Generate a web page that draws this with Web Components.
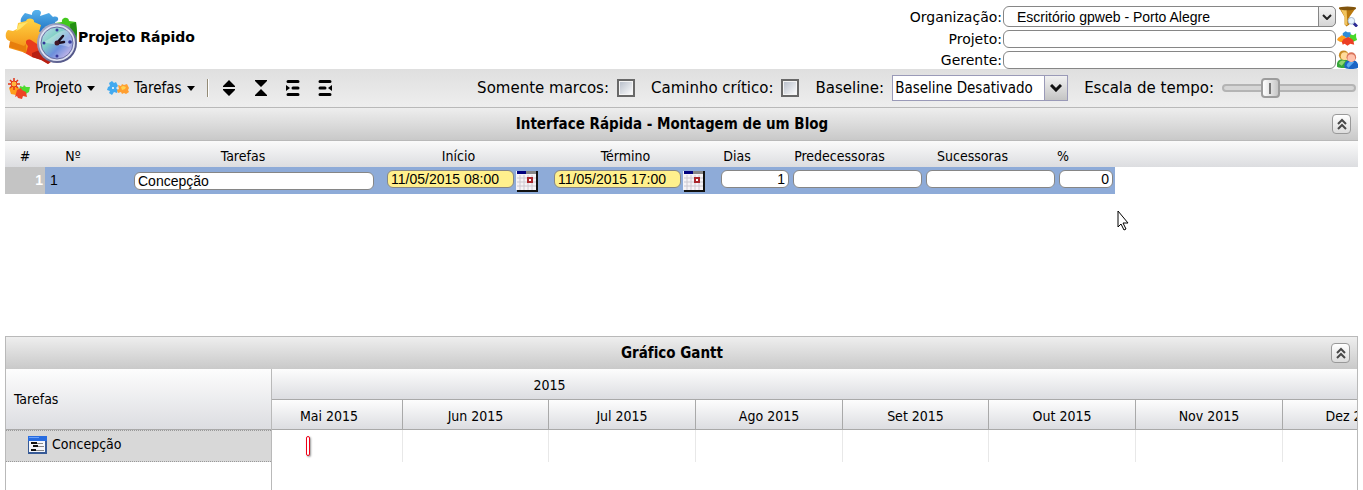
<!DOCTYPE html>
<html lang="pt-BR">
<head>
<meta charset="utf-8">
<meta name="viewport" content="width=device-width, initial-scale=1">
<title>Projeto Rápido</title>
<style>
  * { box-sizing: border-box; }
  body {
    --ui: "DejaVu Sans Condensed", "DejaVu Sans", sans-serif;
    --wide: "DejaVu Sans", sans-serif;
    --field: "Liberation Sans", Arial, sans-serif;
    --line: #b9b9b9;
    margin: 0;
    padding: 0 5px;
    min-height: 100vh;
    display: flex;
    flex-direction: column;
    background: #fff;
    color: #000;
    font: 14px/18px var(--ui);
    text-rendering: optimizeSpeed;
  }
  gp-gantt { flex: 1; }
</style>
</head>
<body>
<gp-header>Projeto Rápido</gp-header>
<gp-toolbar></gp-toolbar>
<gp-titlebar>Interface Rápida - Montagem de um Blog</gp-titlebar>
<gp-task-grid></gp-task-grid>
<gp-gantt></gp-gantt>
<gp-pointer></gp-pointer>

<script>
const ICONS = {
  logo: `<svg viewBox="0 0 72 54" width="72" height="54">
    <defs>
      <linearGradient id="b" x2="0" y2="1"><stop stop-color="#58b4ee"/><stop offset="1" stop-color="#1263b8"/></linearGradient>
      <linearGradient id="o" x2="0" y2="1"><stop stop-color="#ffd545"/><stop offset="1" stop-color="#f28a10"/></linearGradient>
      <linearGradient id="f" x2="1" y2="1"><stop stop-color="#c9d9f5"/><stop offset=".35" stop-color="#80d0c4"/><stop offset=".6" stop-color="#6c8fdc"/><stop offset="1" stop-color="#efc9ef"/></linearGradient>
      <linearGradient id="r" x2="1" y2="1"><stop stop-color="#b9bcd6"/><stop offset="1" stop-color="#3f4379"/></linearGradient>
    </defs>
    <path fill="url(#b)" d="M20 3l7 2c-1-6 9-7 9-2l-1 3 9-3 4 4c6-2 7 4 2 5l2 6-12 9-14-4-9-6 4-3c-3-3-4-2-5-1-1-3 0-6 4-10z"/>
    <path fill="#42c81c" d="M50 13l7-1c-1-5 7-6 7-1l7 1 1 10-1 12-14-4-9-7z"/>
    <path fill="#238d13" d="M65 14l6-2 1 10-1 12-5-5z"/>
    <path fill="#e83b1c" d="M22 26l7-5 6 3 8 0 4 25-4 5-6-4-10-3-9-5z"/>
    <path fill="#b81f12" d="M27 43l10-4 12 11-6 4-7-4-9-3z"/>
    <path fill="url(#o)" d="M13 13l8-2c1-4 9-3 8 1l7 3-2 7c4-1 5 4 1 5l-3 7-6-4c-5-2-7 3-3 6l-2 7-17-5 2-7C-1 31 0 22 3 20l5 1 4-2z"/>
    <path fill="#e77e0c" d="M5 31l14 5 2-2v8l-17-5z"/>
    <path fill="#ffe46a" d="M14 14l9-2-8 7-4 2z"/>
    <circle cx="52" cy="33" r="20" fill="url(#r)"/>
    <circle cx="52" cy="33" r="18" fill="#dfe2f3"/>
    <circle cx="52" cy="33" r="16" fill="url(#f)" stroke="#6a6fa3"/>
    <path d="M37 32c8-1 15-12 25-12 7 6 5 14 2 17-10-3-19-3-27-5z" fill="#fff" opacity=".3"/>
    <g fill="#34389a"><circle cx="52" cy="20" r="1.5"/><circle cx="65" cy="32" r="1.8"/><circle cx="52" cy="46" r="1.5"/><circle cx="39" cy="33" r="1.5"/></g>
    <path d="M52 33l6-7M53 33l6-1" stroke="#1b0c1e" stroke-width="2.5" stroke-linecap="round"/>
    <circle cx="52" cy="33" r="2.5" fill="#421523"/>
  </svg>`,
  projeto: `<svg viewBox="0 0 22 22" width="22" height="22">
    <path fill="#ff9d1c" d="M1 11l5-3 5 3 1 5-4 2-5-1z"/>
    <path fill="#4ddb31" d="M12 9l3 1 1-2 2 2h4l-1 5-5 3-5-5z"/>
    <path fill="#ee4524" d="M9 13l4-2 1 2 4 2 1 5-4-1-1 3-4-1-1-2-2 1z"/>
    <g stroke="#e1361a" stroke-width="1.5"><path d="M6 1v12M0 7h12M2 3l8 8M10 3l-8 8"/></g>
    <circle cx="6" cy="7" r="3" fill="#ffb63c" stroke="#e1361a"/>
  </svg>`,
  tarefas: `<svg viewBox="0 0 22 16" width="22" height="16">
    <path fill="#42aaf0" d="M2 3l3-2 2 2 2-1 2 4-2 2 2 2-1 3-3-1-2 3-3-2 1-2-3-1 1-3 2-1z"/>
    <circle cx="6" cy="8" r="1" fill="#fff"/>
    <path fill="#ff9f31" d="M11 5l3 1 1-2 2 1 3-1 2 4-1 2 1 2-3 2-2-1-2 1-1-2-3 1-1-3 2-1z"/>
    <path fill="#ffd34f" d="M14 7l2-1 3 1-1 2-3 1z"/>
  </svg>`,
  expand: `<svg viewBox="0 0 16 18" width="16" height="18"><path d="M8 1l6 6v1H2V7zM2 10h12v1l-6 6-6-6z"/></svg>`,
  collapse: `<svg viewBox="0 0 16 18" width="16" height="18"><path d="M2 1h12v1L8 8 2 2zM8 10l6 6v1H2v-1z"/></svg>`,
  indent: `<svg viewBox="0 0 16 18" width="16" height="18">
    <path d="M3 2.500h10M8 9h5M3 15.500h10" stroke="#000" stroke-width="3" stroke-linecap="round"/><path d="M1 6l4 3-4 3z"/>
  </svg>`,
  outdent: `<svg viewBox="0 0 16 18" width="16" height="18">
    <path d="M3 2.500h10M3 9h5M3 15.500h10" stroke="#000" stroke-width="3" stroke-linecap="round"/><path d="M15 6l-4 3 4 3z"/>
  </svg>`,
  caret: `<svg viewBox="0 0 8 5" width="8" height="5"><path d="M0 0h8L4 5z"/></svg>`,
  chevron: `<svg viewBox="0 0 10 6" width="10" height="6"><path d="M1 1l4 4 4-4" fill="none" stroke="#222" stroke-width="2"/></svg>`,
  chevronBold: `<svg viewBox="0 0 12 8" width="12" height="8"><path d="M1 1l5 5 5-5" fill="none" stroke="#111" stroke-width="3"/></svg>`,
  up: `<svg viewBox="0 0 12 12" width="12" height="12"><path d="M2 6l4-4 4 4M2 11l4-4 4 4" fill="none" stroke="#484848" stroke-width="2"/></svg>`,
  funnel: `<svg viewBox="0 0 22 21" width="22" height="21">
    <path fill="#b9790f" d="M2 1h18l-7 10v8l-3 2-2-2v-8z"/>
    <path fill="#f1c45d" d="M4 3h6l1 17-3-1v-8z"/>
    <ellipse cx="11" cy="2" rx="9" ry="2" fill="#80540d"/>
    <path d="M17 17l4 4" stroke="#2b2995" stroke-width="3"/>
    <circle cx="15" cy="15" r="3.5" fill="#e8f4ff" stroke="#a3b6cc"/>
  </svg>`,
  puzzle: `<svg viewBox="0 0 22 16" width="22" height="16">
    <path fill="#2f8bd7" d="M6 2l3-2 2 1 3 0 1 4-4 2-5-1z"/>
    <path fill="#48d829" d="M14 3l3 1 3-2v4l1 3-4 2-4-4z"/>
    <path fill="#ff9e1b" d="M1 7l4-3 3 1 2 3-2 4-5-1-3-2z"/>
    <path fill="#ec3e24" d="M7 8l5-2 2 1 3 2 1 5-4-1-3 2-3-2-2 1-1-3z"/>
  </svg>`,
  people: `<svg viewBox="0 0 22 20" width="22" height="20">
    <path fill="#36a63a" d="M0 17c-1-6 3-8 7-8s7 3 6 8c-4 2-9 2-13 0z"/>
    <path fill="#8ed66d" d="M2 14c1-4 4-4 7-3l-4 5z"/>
    <circle cx="7" cy="5" r="5" fill="#c88b24"/><circle cx="8" cy="6" r="4" fill="#ffdb9a"/>
    <path fill="#1c65c5" d="M8 18c-1-6 2-8 7-8s8 3 7 8c-4 2-10 2-14 0z"/>
    <path fill="#5aa9ef" d="M10 16c1-4 4-5 8-4l-6 6z"/>
    <circle cx="15" cy="7" r="5" fill="#d8735a"/><circle cx="15" cy="8" r="4" fill="#ffc1ac"/>
  </svg>`,
  calendar: `<svg viewBox="0 0 22 22" width="22" height="22">
    <path fill="#111" d="M1 1h21v21H1z"/><path fill="#f6f3f6" d="M0 1h20v19H0z"/>
    <path fill="#858585" d="M10 1h10v3H10z"/><path fill="#00007e" d="M1 1h9v3H1z"/>
    <path d="M1 8h19M1 12h19M1 16h19M4 5v15M8 5v15M12 5v15M16 5v15" stroke="#ccc8d0"/>
    <path d="M12 8h4v4h-4z" fill="#fff" stroke="#a9262b" stroke-width="2"/>
  </svg>`,
  task: `<svg viewBox="0 0 19 18" width="19" height="18">
    <path fill="#375a96" d="M0 0h19v18H0z"/><path fill="#f4f6fb" d="M1 5h16v11H1z"/>
    <path fill="#286ce0" d="M0 0h19v5H0z"/><path fill="#6ca2fb" d="M1 1h10v1H1z"/>
    <path fill="#111" d="M3 6h6v2H3zM5 9h5v2H5zM3 13h5v2H3z"/><path fill="#888" d="M9 7h6v1H9zM10 10h6v1h-6zM8 14h8v1H8z"/>
  </svg>`
};

// Shared helper: every element below renders one template into an open root
class GpElement extends HTMLElement {
  constructor() {
    super();
    this.attachShadow({ mode: 'open' });
  }

  connectedCallback() {
    this.shadowRoot.innerHTML = `
      <style>* { box-sizing: border-box; text-rendering: optimizeSpeed; } ${this.styles()}</style>
      ${this.render()}
    `;
  }

  styles() { return ':host { display: block; }'; }
  render() { return '<slot></slot>'; }
}

class GpIcon extends GpElement {
  styles() {
    return `
      :host { display: inline-flex; flex: none; align-items: center; justify-content: center; }
      svg { display: block; }
    `;
  }
  render() { return ICONS[this.getAttribute('name')] || ''; }
}

class GpHeader extends GpElement {
  styles() {
    return `
      :host { display: flex; justify-content: space-between; align-items: flex-start; }
      .brand { display: flex; align-items: center; gap: 1px; padding-top: 10px; }
      h1 { margin: 0; font: bold 14px/18px var(--wide); }
      form {
        display: grid;
        grid-template-columns: auto 333px 21px;
        grid-template-rows: 21px 18px 18px;
        gap: 3px 1px;
        align-items: center;
        padding-top: 6px;
        font: 14px/18px var(--wide);
      }
      label { text-align: right; }
      input, select {
        width: 100%;
        height: 100%;
        margin: 0;
        border: 1px solid #868686;
        border-radius: 6px;
        background: #fff;
        color: #000;
        font: 14px/18px var(--field);
      }
      select { appearance: none; grid-area: 1 / 1; padding: 0 13px; }
      .select { display: grid; grid-template: 100% / 100%; height: 21px; }
      .arrow {
        grid-area: 1 / 1;
        justify-self: end;
        width: 18px;
        border: 1px solid #868686;
        border-radius: 0 5px 5px 0;
        background: linear-gradient(#f4f4f4, #d5d5d5);
        pointer-events: none;
      }
      form > gp-icon { height: 18px; }
    `;
  }
  render() {
    return `
      <div class="brand"><gp-icon name="logo"></gp-icon><h1><slot></slot></h1></div>
      <form>
        <label for="org">Organização:</label>
        <div class="select">
          <select id="org"><option>Escritório gpweb - Porto Alegre</option></select>
          <gp-icon class="arrow" name="chevron"></gp-icon>
        </div>
        <gp-icon name="funnel"></gp-icon>
        <label for="projeto">Projeto:</label><input id="projeto" type="text"><gp-icon name="puzzle"></gp-icon>
        <label for="gerente">Gerente:</label><input id="gerente" type="text"><gp-icon name="people"></gp-icon>
      </form>
    `;
  }
}

class GpToolbar extends GpElement {
  styles() {
    return `
      :host {
        display: flex;
        align-items: center;
        justify-content: space-between;
        height: 39px;
        padding: 0 2px 0 3px;
        border-bottom: 1px solid var(--line);
        background: linear-gradient(#dfdfdf, #eeeeee);
      }
      .group { display: flex; align-items: center; }
      button {
        display: flex;
        align-items: center;
        gap: 5px;
        margin: 0;
        padding: 0;
        border: 0;
        background: none;
        color: inherit;
        font: 15px/20px var(--ui);
      }
      .menus { gap: 12px; }
      .sep { width: 2px; height: 18px; border-left: 1px solid #938b76; background: #fff; }
      .tools { gap: 16px; }
      .options { font: 15px/20px var(--wide); }
      .options label { margin-right: 8px; }
      .options > :is(input, .select) { margin-right: 16px; }
      .options > input:last-child { margin-right: 0; }
      input[type=checkbox] {
        appearance: none;
        width: 18px;
        height: 18px;
        margin: 0;
        border: 2px solid #686868;
        outline: 1px solid #f4f4f4;
        outline-offset: -3px;
        background: linear-gradient(135deg, #b5bcc8, #ffffff);
      }
      .select { display: grid; grid-template: 26px / 176px; }
      select {
        appearance: none;
        grid-area: 1 / 1;
        margin: 0;
        padding: 0 2px;
        border: 1px solid #9a9ab8;
        border-radius: 0;
        background: #fff;
        color: #000;
        font: 15px/20px var(--ui);
      }
      .arrow {
        grid-area: 1 / 1;
        justify-self: end;
        width: 24px;
        border: 1px solid #9a9ab8;
        background: linear-gradient(#f1f1f1, #c4c4c4);
        pointer-events: none;
      }
      input[type=range] {
        appearance: none;
        width: 134px;
        height: 20px;
        margin: 0;
        background: none;
      }
      input[type=range]::-webkit-slider-runnable-track {
        height: 8px;
        border: 2px solid #b4b4b4;
        border-radius: 4px;
        background: #d6d6d6;
      }
      input[type=range]::-webkit-slider-thumb {
        appearance: none;
        width: 19px;
        height: 20px;
        margin-top: -8px;
        border: 2px solid #9c9c9c;
        border-radius: 4px;
        background: linear-gradient(#777, #777) center / 2px 11px no-repeat, linear-gradient(90deg, #fff, #c6c6c6);
      }
    `;
  }
  render() {
    return `
      <div class="group menus">
        <button type="button"><gp-icon name="projeto"></gp-icon>Projeto<gp-icon name="caret"></gp-icon></button>
        <button type="button"><gp-icon name="tarefas"></gp-icon>Tarefas<gp-icon name="caret"></gp-icon></button>
        <span class="sep"></span>
        <div class="group tools">
          <button type="button" aria-label="Expandir"><gp-icon name="expand"></gp-icon></button>
          <button type="button" aria-label="Recolher"><gp-icon name="collapse"></gp-icon></button>
          <button type="button" aria-label="Aumentar recuo"><gp-icon name="indent"></gp-icon></button>
          <button type="button" aria-label="Diminuir recuo"><gp-icon name="outdent"></gp-icon></button>
        </div>
      </div>
      <div class="group options">
        <label for="marcos">Somente marcos:</label><input id="marcos" type="checkbox">
        <label for="critico">Caminho crítico:</label><input id="critico" type="checkbox">
        <label for="baseline">Baseline:</label>
        <div class="select">
          <select id="baseline"><option>Baseline Desativado</option></select>
          <gp-icon class="arrow" name="chevronBold"></gp-icon>
        </div>
        <label for="escala">Escala de tempo:</label><input id="escala" type="range" value="33">
      </div>
    `;
  }
}

class GpTitlebar extends GpElement {
  styles() {
    return `
      :host {
        display: flex;
        align-items: center;
        height: 32px;
        padding: 0 7px;
        background: linear-gradient(#eeeeee, #c9c9c9);
      }
      h2 { flex: 1; margin: 0; text-align: center; font: bold 15px/20px var(--ui); }
      button {
        display: flex;
        align-items: center;
        justify-content: center;
        width: 19px;
        height: 20px;
        margin: 0;
        padding: 0;
        border: 1px solid #999;
        border-radius: 4px;
        background: linear-gradient(#fff, #dcdcdc);
      }
    `;
  }
  render() {
    return `
      <h2><slot></slot></h2>
      <button type="button" aria-label="Recolher painel"><gp-icon name="up"></gp-icon></button>
    `;
  }
}

class GpTaskGrid extends GpElement {
  styles() {
    return `
      :host { display: block; min-height: 196px; border-top: 1px solid var(--line); }
      table { width: 100%; border-collapse: collapse; table-layout: fixed; }
      thead tr { height: 26px; background: linear-gradient(#fafafa, #dcdde0); }
      th { padding: 4px 0 0; font: 14px/20px var(--ui); text-align: center; }
      .date { padding-right: 20px; }
      .days, .link { padding-right: 36px; }
      .percent { text-align: left; }
      td {
        height: 27px;
        padding: 3px 2px 2px;
        background: #8eabd8;
        vertical-align: top;
        font: 14px/20px var(--field);
      }
      td.index { background: #c4c4c4; color: #fff; font-weight: bold; text-align: right; }
      td.number { padding-left: 5px; }
      td.name { padding: 5px 11px 0 33px; }
      td.fill { background: none; }
      .cell { display: flex; gap: 2px; }
      input {
        display: block;
        width: 100%;
        height: 18px;
        margin: 0;
        padding: 0 3px;
        border: 1px solid #868686;
        border-radius: 6px;
        background: #fff;
        color: #000;
        font: 14px/16px var(--field);
      }
      .cell input { width: 127px; background: #fff08d; }
      .num { text-align: right; }
    `;
  }
  render() {
    return `
      <table>
        <colgroup>
          <col style="width:40px"><col style="width:56px"><col style="width:284px">
          <col style="width:167px"><col style="width:167px"><col style="width:72px">
          <col style="width:133px"><col style="width:133px"><col style="width:58px"><col>
        </colgroup>
        <thead>
          <tr>
            <th>#</th><th>Nº</th><th>Tarefas</th><th class="date">Início</th><th class="date">Término</th>
            <th class="days">Dias</th><th class="link">Predecessoras</th><th class="link">Sucessoras</th>
            <th class="percent">%</th><th></th>
          </tr>
        </thead>
        <tbody>
          <tr>
            <td class="index">1</td>
            <td class="number">1</td>
            <td class="name"><input aria-label="Tarefa" value="Concepção"></td>
            <td><div class="cell"><input aria-label="Início" value="11/05/2015 08:00"><gp-icon name="calendar"></gp-icon></div></td>
            <td><div class="cell"><input aria-label="Término" value="11/05/2015 17:00"><gp-icon name="calendar"></gp-icon></div></td>
            <td><input class="num" aria-label="Dias" value="1"></td>
            <td><input aria-label="Predecessoras"></td>
            <td><input aria-label="Sucessoras"></td>
            <td><input class="num" aria-label="%" value="0"></td>
            <td class="fill"></td>
          </tr>
        </tbody>
      </table>
    `;
  }
}

class GpGantt extends GpElement {
  styles() {
    return `
      :host {
        display: flex;
        flex-direction: column;
        border: 1px solid var(--line);
        border-bottom: 0;
      }
      .body { flex: 1; display: flex; min-height: 120px; }
      .side { flex: none; width: 266px; border-right: 1px solid var(--line); }
      .head {
        display: flex;
        align-items: center;
        height: 61px;
        padding: 0 8px;
        border-bottom: 1px solid #a9a9a9;
        background: linear-gradient(#fdfdfd, #dcdde1);
      }
      .task {
        display: flex;
        gap: 5px;
        height: 32px;
        padding: 4px 22px;
        border: 1px dotted #999;
        border-width: 1px 0;
        background: #d8d8d8;
        line-height: 18px;
      }
      .task gp-icon { height: 20px; }
      .timeline { flex: 1; min-width: 0; overflow: hidden; }
      .year, .month { background: linear-gradient(#fdfdfd, #dcdde1); border-bottom: 1px solid #a9a9a9; }
      .year { height: 31px; padding-right: 530px; line-height: 32px; text-align: center; }
      /* scrolled a little into the first month */
      .scroll { display: flex; margin-left: -16px; }
      .col { flex: none; width: 147px; }
      .col:nth-child(3n + 2) { width: 146px; }
      .month { height: 30px; border-right: 1px solid #a9a9a9; line-height: 32px; text-align: center; }
      .slot { height: 32px; padding: 6px 50px; border-right: 1px solid #e8e8e8; }
      .bar { width: 4px; height: 20px; border: 1px solid #f00018; border-radius: 2px; box-shadow: 1px 1px 2px #999; background: #fff; }
    `;
  }
  render() {
    const months = ['Mai', 'Jun', 'Jul', 'Ago', 'Set', 'Out', 'Nov', 'Dez'];
    return `
      <gp-titlebar>Gráfico Gantt</gp-titlebar>
      <div class="body">
        <div class="side">
          <div class="head">Tarefas</div>
          <div class="task"><gp-icon name="task"></gp-icon>Concepção</div>
        </div>
        <div class="timeline">
          <div class="year">2015</div>
          <div class="scroll">
            ${months.map((month, i) => `
              <div class="col">
                <div class="month">${month} 2015</div>
                <div class="slot">${i === 0 ? '<div class="bar"></div>' : ''}</div>
              </div>`).join('')}
          </div>
        </div>
      </div>
    `;
  }
}

class GpPointer extends GpElement {
  styles() { return ':host { position: absolute; left: 1117px; top: 210px; pointer-events: none; } svg { display: block; }'; }
  render() {
    return `<svg viewBox="0 0 13 21" width="13" height="21">
      <path d="M1 1v16l3-3 3 6 2-1-3-6h5z" fill="#fff" stroke="#000"/>
    </svg>`;
  }
}

customElements.define('gp-icon', GpIcon);
customElements.define('gp-header', GpHeader);
customElements.define('gp-toolbar', GpToolbar);
customElements.define('gp-titlebar', GpTitlebar);
customElements.define('gp-task-grid', GpTaskGrid);
customElements.define('gp-gantt', GpGantt);
customElements.define('gp-pointer', GpPointer);
</script>
</body>
</html>
